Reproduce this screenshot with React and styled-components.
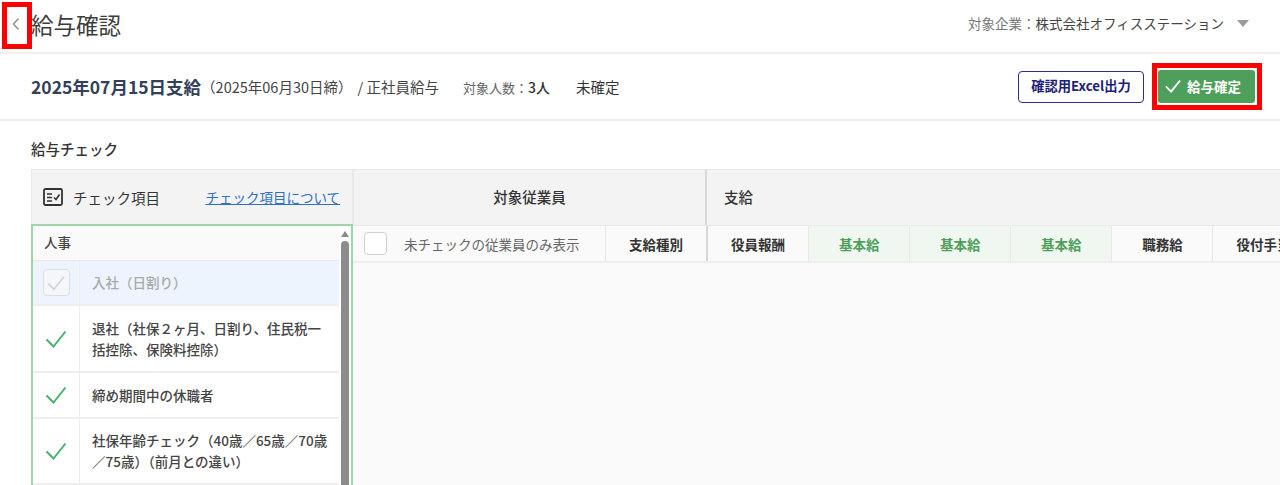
import React from 'react'
import styled, { createGlobalStyle } from 'styled-components'

const GlobalStyle = createGlobalStyle`
  html, body {
    margin: 0;
    padding: 0;
    background: #fff;
    overflow: hidden;
    font-family: "Noto Sans CJK JP", "Noto Sans", sans-serif;
    color: #333;
  }
  * { box-sizing: border-box; }
`

const checkItems = [
  { label: '入社（日割り）', pending: true },
  { label: '退社（社保２ヶ月、日割り、住民税一括控除、保険料控除）', height: 67 },
  { label: '締め期間中の休職者', height: 46 },
  { label: '社保年齢チェック（40歳／65歳／70歳／75歳）（前月との違い）', height: 66 },
  { label: '', height: 46 },
]

const payColumns = [
  { label: '役員報酬', first: true },
  { label: '基本給', basic: true },
  { label: '基本給', basic: true },
  { label: '基本給', basic: true },
  { label: '職務給' },
  { label: '役付手当' },
]

const CheckIcon = ({ size = 24, color = '#46b06a', weight = 1.9 }) => (
  <svg width={size} height={size} viewBox="0 0 24 24" fill="none">
    <path d="M2.5 12.5 L9.5 19.5 L21.5 4.5" stroke={color} strokeWidth={weight} />
  </svg>
)

const App = () => (
  <Page>
    <GlobalStyle />
    <Header>
      <BackButton>
        <svg width="10" height="14" viewBox="0 0 10 14" fill="none">
          <path d="M7.5 1.5 L2.5 7 L7.5 12.5" stroke="#9a9a9a" strokeWidth="1.8" />
        </svg>
        <BackMark />
      </BackButton>
      <Title>給与確認</Title>
      <Company>
        <CompanyLabel>対象企業：</CompanyLabel>
        株式会社オフィスステーション
        <Caret />
      </Company>
    </Header>

    <SubHeader>
      <PayDate>2025年07月15日支給</PayDate>
      <Closing>（2025年06月30日締）</Closing>
      <PayType>/ 正社員給与</PayType>
      <Count>
        <CountLabel>対象人数：</CountLabel>3人
      </Count>
      <Status>未確定</Status>
      <Actions>
        <OutlineButton>確認用Excel出力</OutlineButton>
        <ConfirmWrap>
          <ConfirmButton>
            <CheckIcon size={18} color="#fff" weight={2.4} />
            給与確定
          </ConfirmButton>
          <ConfirmMark />
        </ConfirmWrap>
      </Actions>
    </SubHeader>

    <Section>
      <SectionTitle>給与チェック</SectionTitle>
      <Board>
        <LeftPanel>
          <LeftHead>
            <svg width="20" height="18" viewBox="0 0 20 18" fill="none">
              <rect x="1" y="1" width="18" height="16" rx="1.5" stroke="#333" strokeWidth="1.8" />
              <path d="M4 6h5M4 9.5h5M4 13h5" stroke="#333" strokeWidth="1.5" />
              <path d="M11 9.5 L13 11.5 L16.5 6.5" stroke="#333" strokeWidth="1.6" />
            </svg>
            <LeftHeadTitle>チェック項目</LeftHeadTitle>
            <HelpLink>チェック項目について</HelpLink>
          </LeftHead>
          <LeftBody>
            <ItemList>
              <Category>人事</Category>
              {checkItems.map((item, i) => (
                <ItemRow key={i} $pending={item.pending} $height={item.height || 45}>
                  <ItemCheck>
                    {item.pending ? (
                      <PendingBox>
                        <CheckIcon size={20} color="#d0d2d6" />
                      </PendingBox>
                    ) : item.label ? (
                      <CheckIcon />
                    ) : null}
                  </ItemCheck>
                  <ItemLabel $pending={item.pending}>{item.label}</ItemLabel>
                </ItemRow>
              ))}
            </ItemList>
            <ScrollTrack>
              <ScrollArrow />
              <ScrollThumb />
            </ScrollTrack>
          </LeftBody>
        </LeftPanel>

        <RightPanel>
          <GroupRow>
            <EmployeeGroup>対象従業員</EmployeeGroup>
            <PayGroup>支給</PayGroup>
          </GroupRow>
          <ColumnRow>
            <FilterCell>
              <FilterBox />
              未チェックの従業員のみ表示
            </FilterCell>
            <TypeCell>支給種別</TypeCell>
            {payColumns.map((col, i) => (
              <PayCell key={i} $basic={col.basic} $first={col.first}>
                {col.label}
              </PayCell>
            ))}
          </ColumnRow>
          <EmptyArea />
        </RightPanel>
      </Board>
    </Section>
  </Page>
)

export default App

const Page = styled.div`
  width: 1280px;
  height: 485px;
  overflow: hidden;
  position: relative;
`

const Header = styled.header`
  height: 54px;
  display: flex;
  align-items: center;
  padding: 0 31px 5px 0;
  border-bottom: 2px solid #eeeeee;
`

const BackButton = styled.div`
  position: relative;
  width: 31px;
  height: 44px;
  display: flex;
  align-items: center;
  justify-content: center;
`

const BackMark = styled.div`
  position: absolute;
  left: 2px;
  top: 0;
  width: 30px;
  height: 47px;
  border: 5px solid #ff0000;
`

const Title = styled.h1`
  margin: 0;
  font-size: 22.5px;
  font-weight: 400;
  line-height: 30px;
  color: #3c3c3c;
`

const Company = styled.div`
  margin-left: auto;
  margin-bottom: 1px;
  display: flex;
  align-items: center;
  font-size: 13.5px;
  color: #444;
`

const CompanyLabel = styled.span`
  color: #777;
`

const Caret = styled.span`
  margin-left: 13px;
  width: 0;
  height: 0;
  border-left: 6px solid transparent;
  border-right: 6px solid transparent;
  border-top: 7px solid #9b9b9b;
`

const SubHeader = styled.div`
  height: 67px;
  display: flex;
  align-items: center;
  padding: 0 25px 0 31px;
  border-bottom: 2px solid #eeeeee;
`

const PayDate = styled.span`
  font-size: 17.5px;
  font-weight: 700;
  color: #34405a;
`

const Closing = styled.span`
  font-size: 14.5px;
  color: #444;
`

const PayType = styled.span`
  margin-left: 5px;
  font-size: 14.5px;
  color: #444;
`

const Count = styled.span`
  margin-left: 24px;
  font-size: 14px;
  font-weight: 500;
  color: #333;
`

const CountLabel = styled.span`
  font-size: 13px;
  font-weight: 400;
  color: #666;
`

const Status = styled.span`
  margin-left: 26px;
  font-size: 14.5px;
  color: #333;
`

const Actions = styled.div`
  margin-left: auto;
  display: flex;
  align-items: center;
  gap: 14px;
`

const OutlineButton = styled.button`
  width: 126px;
  height: 32px;
  padding: 0 0 2px;
  background: #fff;
  border: 1px solid #2c2f83;
  border-radius: 4px;
  color: #1d2077;
  font: 700 13.3px "Noto Sans CJK JP", sans-serif;
`

const ConfirmWrap = styled.div`
  position: relative;
`

const ConfirmButton = styled.button`
  width: 97px;
  height: 33px;
  padding: 0 0 2px 6px;
  display: flex;
  align-items: center;
  justify-content: flex-start;
  gap: 5px;
  background: #4f9f5c;
  border: none;
  border-radius: 3px;
  color: #fff;
  font: 700 13.5px "Noto Sans CJK JP", sans-serif;
`

const ConfirmMark = styled.div`
  position: absolute;
  left: -6px;
  top: -7px;
  width: 110px;
  height: 47px;
  border: 5px solid #ff0000;
`

const Section = styled.section`
  padding: 18px 0 0 31px;
`

const SectionTitle = styled.h2`
  margin: 0 0 10px;
  height: 20px;
  font-size: 14.5px;
  font-weight: 500;
  line-height: 20px;
  color: #333;
`

const Board = styled.div`
  display: flex;
  align-items: flex-start;
`

const LeftPanel = styled.div`
  width: 322px;
  flex: none;
`

const LeftHead = styled.div`
  height: 55px;
  display: flex;
  align-items: center;
  padding: 0 12px 0 11px;
  background: #f3f3f3;
  border: 1px solid #e8e8e8;
  border-bottom: none;
`

const LeftHeadTitle = styled.span`
  margin-left: 10px;
  font-size: 14.5px;
  color: #333;
`

const HelpLink = styled.a`
  margin-left: auto;
  font-size: 13.5px;
  color: #2f6fc4;
  text-decoration: underline;
`

const LeftBody = styled.div`
  height: 262px;
  display: flex;
  border: 2px solid #9fd6a8;
  border-bottom: none;
  overflow: hidden;
`

const ItemList = styled.div`
  width: 306px;
  flex: none;
`

const Category = styled.div`
  height: 35px;
  display: flex;
  align-items: center;
  padding-left: 11px;
  padding-bottom: 2px;
  background: #fafafa;
  border-bottom: 1px solid #e8e8e8;
  font-size: 13.5px;
  font-weight: 500;
  color: #444;
`

const ItemRow = styled.div`
  display: flex;
  height: ${p => p.$height}px;
  background: ${p => (p.$pending ? '#edf4fd' : '#fff')};
  border-bottom: 2px solid #eeeeee;
`

const ItemCheck = styled.div`
  width: 47px;
  flex: none;
  display: flex;
  align-items: center;
  justify-content: center;
  border-right: 1px solid #ececec;
`

const PendingBox = styled.div`
  width: 27px;
  height: 27px;
  display: flex;
  align-items: center;
  justify-content: center;
  background: #f4f6fa;
  border: 1px solid #dcdee3;
  border-radius: 4px;
`

const ItemLabel = styled.div`
  flex: 1;
  display: flex;
  align-items: center;
  padding: 0 10px 0 12px;
  font-size: 13.5px;
  font-weight: 500;
  line-height: 21px;
  color: ${p => (p.$pending ? '#a9a9a9' : '#444')};
`

const ScrollTrack = styled.div`
  width: 12px;
  flex: none;
  display: flex;
  flex-direction: column;
  align-items: center;
  padding-top: 5px;
`

const ScrollArrow = styled.div`
  width: 0;
  height: 0;
  border-left: 4px solid transparent;
  border-right: 4px solid transparent;
  border-bottom: 6px solid #8a8a8a;
`

const ScrollThumb = styled.div`
  margin-top: 4px;
  width: 8px;
  flex: 1;
  background: #8c8c8c;
  border-radius: 4px 4px 0 0;
`

const RightPanel = styled.div`
  flex: 1;
  min-width: 0;
`

const GroupRow = styled.div`
  height: 57px;
  display: flex;
  background: #f3f3f3;
  border-top: 1px solid #e8e8e8;
  border-bottom: 1px solid #e8e8e8;
`

const EmployeeGroup = styled.div`
  width: 354px;
  flex: none;
  display: flex;
  align-items: center;
  justify-content: center;
  padding-bottom: 2px;
  font-size: 14.5px;
  font-weight: 500;
  color: #333;
  border-left: 1px solid #e8e8e8;
  border-right: 2px solid #d8d8d8;
`

const PayGroup = styled.div`
  flex: 1;
  display: flex;
  align-items: center;
  padding: 0 0 2px 17px;
  font-size: 14.5px;
  font-weight: 500;
  color: #333;
`

const ColumnRow = styled.div`
  height: 37px;
  display: flex;
  background: #fafafa;
  border-bottom: 2px solid #eeeeee;
`

const FilterCell = styled.div`
  width: 253px;
  flex: none;
  display: flex;
  align-items: center;
  padding-left: 11px;
  font-size: 13.5px;
  color: #666;
  border-right: 1px solid #e8e8e8;
`

const FilterBox = styled.span`
  width: 23px;
  height: 23px;
  margin-right: 17px;
  background: #fff;
  border: 1px solid #cfcfcf;
  border-radius: 4px;
`

const TypeCell = styled.div`
  width: 102px;
  flex: none;
  display: flex;
  align-items: center;
  justify-content: center;
  font-size: 13.5px;
  font-weight: 700;
  color: #333;
  border-right: 2px solid #d8d8d8;
`

const PayCell = styled.div`
  width: 101.1px;
  flex: none;
  display: flex;
  align-items: center;
  justify-content: center;
  font-size: 13.5px;
  font-weight: 700;
  color: ${p => (p.$basic ? '#4f9f5c' : '#333')};
  background: ${p => (p.$basic ? '#eff7f0' : 'transparent')};
  border-right: 1px solid #e8e8e8;
`

const EmptyArea = styled.div`
  height: 223px;
  background: #fafafa;
`
